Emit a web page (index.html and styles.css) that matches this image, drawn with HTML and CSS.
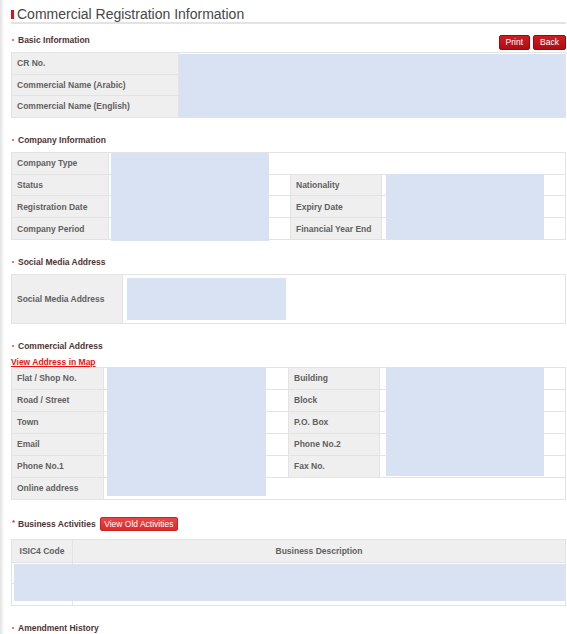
FILE: index.html
```html
<!DOCTYPE html>
<html>
<head>
<meta charset="utf-8">
<link rel="stylesheet" href="styles.css">
</head>
<body>
<div class="page">
  <div class="title"><span class="title-bar"></span>Commercial Registration Information</div>

  <div class="sec-head first">
    <div class="heading">Basic Information</div>
    <div class="btns"><span class="btn">Print</span><span class="btn">Back</span></div>
  </div>
  <div class="tbl-wrap">
    <table class="grid basic">
      <colgroup><col class="c-basic-l"><col></colgroup>
      <tr><td class="lbl">CR No.</td><td class="val"></td></tr>
      <tr><td class="lbl">Commercial Name (Arabic)</td><td class="val"></td></tr>
      <tr><td class="lbl">Commercial Name (English)</td><td class="val"></td></tr>
    </table>
    <div class="redact r-basic"></div>
  </div>

  <div class="heading sec">Company Information</div>
  <div class="tbl-wrap">
    <table class="grid company">
      <colgroup><col class="c-co-1"><col class="c-co-2"><col class="c-co-3"><col></colgroup>
      <tr><td class="lbl">Company Type</td><td class="val" colspan="3"></td></tr>
      <tr><td class="lbl">Status</td><td class="val"></td><td class="lbl">Nationality</td><td class="val"></td></tr>
      <tr><td class="lbl">Registration Date</td><td class="val"></td><td class="lbl">Expiry Date</td><td class="val"></td></tr>
      <tr><td class="lbl">Company Period</td><td class="val"></td><td class="lbl">Financial Year End</td><td class="val"></td></tr>
    </table>
    <div class="redact r-co-1"></div>
    <div class="redact r-co-2"></div>
  </div>

  <div class="heading sec">Social Media Address</div>
  <div class="tbl-wrap">
    <table class="grid social">
      <colgroup><col class="c-soc-l"><col></colgroup>
      <tr><td class="lbl">Social Media Address</td><td class="val"></td></tr>
    </table>
    <div class="redact r-soc"></div>
  </div>

  <div class="heading sec">Commercial Address</div>
  <a class="map-link" href="#">View Address in Map</a>
  <div class="tbl-wrap">
    <table class="grid addr">
      <colgroup><col class="c-ad-1"><col class="c-ad-2"><col class="c-ad-3"><col></colgroup>
      <tr><td class="lbl">Flat / Shop No.</td><td class="val"></td><td class="lbl">Building</td><td class="val"></td></tr>
      <tr><td class="lbl">Road / Street</td><td class="val"></td><td class="lbl">Block</td><td class="val"></td></tr>
      <tr><td class="lbl">Town</td><td class="val"></td><td class="lbl">P.O. Box</td><td class="val"></td></tr>
      <tr><td class="lbl">Email</td><td class="val"></td><td class="lbl">Phone No.2</td><td class="val"></td></tr>
      <tr><td class="lbl">Phone No.1</td><td class="val"></td><td class="lbl">Fax No.</td><td class="val"></td></tr>
      <tr><td class="lbl">Online address</td><td class="val" colspan="3"></td></tr>
    </table>
    <div class="redact r-ad-1"></div>
    <div class="redact r-ad-2"></div>
  </div>

  <div class="sec-row sec">
    <div class="heading star">Business Activities</div>
    <span class="btn btn-light">View Old Activities</span>
  </div>
  <div class="tbl-wrap">
    <table class="grid biz">
      <colgroup><col class="c-biz-1"><col></colgroup>
      <tr class="head"><th>ISIC4 Code</th><th>Business Description</th></tr>
      <tr><td></td><td></td></tr>
      <tr><td></td><td></td></tr>
    </table>
    <div class="redact r-biz"></div>
  </div>

  <div class="heading sec last">Amendment History</div>
</div>
</body>
</html>
```
FILE: styles.css
```css
html, body {
  margin: 0;
  padding: 0;
}
body {
  width: 567px;
  height: 634px;
  overflow: hidden;
  font-family: "Liberation Sans", Arial, sans-serif;
  background: linear-gradient(to right, #e3e3e3 0, #efefef 2px, #ffffff 4px);
}
.page {
  display: flex;
  flex-direction: column;
  padding: 0 1px 0 11px;
}
.title {
  display: flex;
  align-items: center;
  padding-top: 7px;
  height: 15px;
  line-height: 15px;
  font-size: 14px;
  color: #474747;
  border-bottom: 2px solid #e3e3e3;
}
.title-bar {
  display: inline-block;
  width: 3px;
  height: 9px;
  background: #d8121b;
  margin-right: 3px;
}
.heading {
  position: relative;
  padding-left: 7px;
  font-size: 8.5px;
  font-weight: bold;
  line-height: 12px;
  color: #4d3535;
}
.heading::before {
  content: "";
  position: absolute;
  left: 1px;
  top: 5px;
  width: 2px;
  height: 2px;
  background: #f07a5a;
}
.heading.star::before {
  content: "*";
  width: auto;
  height: auto;
  background: none;
  color: #e0302a;
  top: -1px;
  left: 1px;
  font-size: 8px;
}
.sec-head {
  display: flex;
  justify-content: space-between;
  align-items: flex-start;
  height: 18px;
  padding-top: 10px;
}
.btns {
  display: flex;
  gap: 3px;
  margin-top: 1px;
}
.btn {
  display: inline-block;
  height: 13px;
  line-height: 13px;
  padding: 0 6px;
  font-size: 8.5px;
  color: #fff;
  background: linear-gradient(#cf1c23, #b00c12);
  border: 1px solid #990a0f;
  border-radius: 2px;
}
.btn-light {
  height: 12px;
  line-height: 12px;
  padding: 0 3.5px;
  background: linear-gradient(#ec4545, #dc2c2c);
  border-color: #c92424;
  margin-left: 4px;
}
.sec {
  margin-top: 16px;
  margin-bottom: 6px;
}
.sec-row {
  display: flex;
  align-items: center;
  height: 13px;
  margin-top: 18px;
  margin-bottom: 8px;
}
.sec.last {
  margin-top: 17px;
  margin-bottom: 0;
  line-height: 10px;
}
.sec.last::before {
  top: 4px;
}
.map-link {
  display: block;
  margin-top: -1px;
  margin-bottom: 0;
  font-size: 8.5px;
  font-weight: bold;
  line-height: 10px;
  color: #ee1111;
  text-decoration: underline;
}
.tbl-wrap {
  position: relative;
}
.grid {
  width: 555px;
  border-collapse: collapse;
  table-layout: fixed;
  border: 1px solid #dcdcdc;
}
.grid td, .grid th {
  border: 1px solid #e3e3e3;
  height: 21px;
  padding: 0 0 0 5px;
  font-size: 8.5px;
  font-weight: bold;
  color: #616161;
  text-align: left;
  white-space: nowrap;
}
.grid.basic td {
  height: 20.6px;
}
.grid.company td {
  height: 20.8px;
}
.grid td.lbl {
  background: #efefef;
}
.grid td.val {
  background: #fff;
}
.social td {
  height: 48px;
}
.biz tr.head th {
  background: #efefef;
  text-align: center;
  padding: 0;
  height: 22px;
}
.biz td {
  height: 20.5px;
}
.c-basic-l { width: 167px; }
.c-co-1 { width: 97px; }
.c-co-2 { width: 182px; }
.c-co-3 { width: 91px; }
.c-soc-l { width: 111px; }
.c-ad-1 { width: 92px; }
.c-ad-2 { width: 185px; }
.c-ad-3 { width: 91px; }
.c-biz-1 { width: 61px; }

.redact {
  position: absolute;
  background: #d9e2f3;
}
.r-basic { left: 168px; top: 2px; width: 386px; height: 63px; }
.r-co-1 { left: 100px; top: 1px; width: 158px; height: 88px; }
.r-co-2 { left: 375px; top: 22px; width: 158px; height: 66px; }
.r-soc { left: 116px; top: 4px; width: 159px; height: 42px; }
.r-ad-1 { left: 96px; top: 0; width: 159px; height: 129px; }
.r-ad-2 { left: 375px; top: 0; width: 158px; height: 109px; }
.r-biz { left: 3px; top: 25px; width: 551px; height: 37px; }
```
